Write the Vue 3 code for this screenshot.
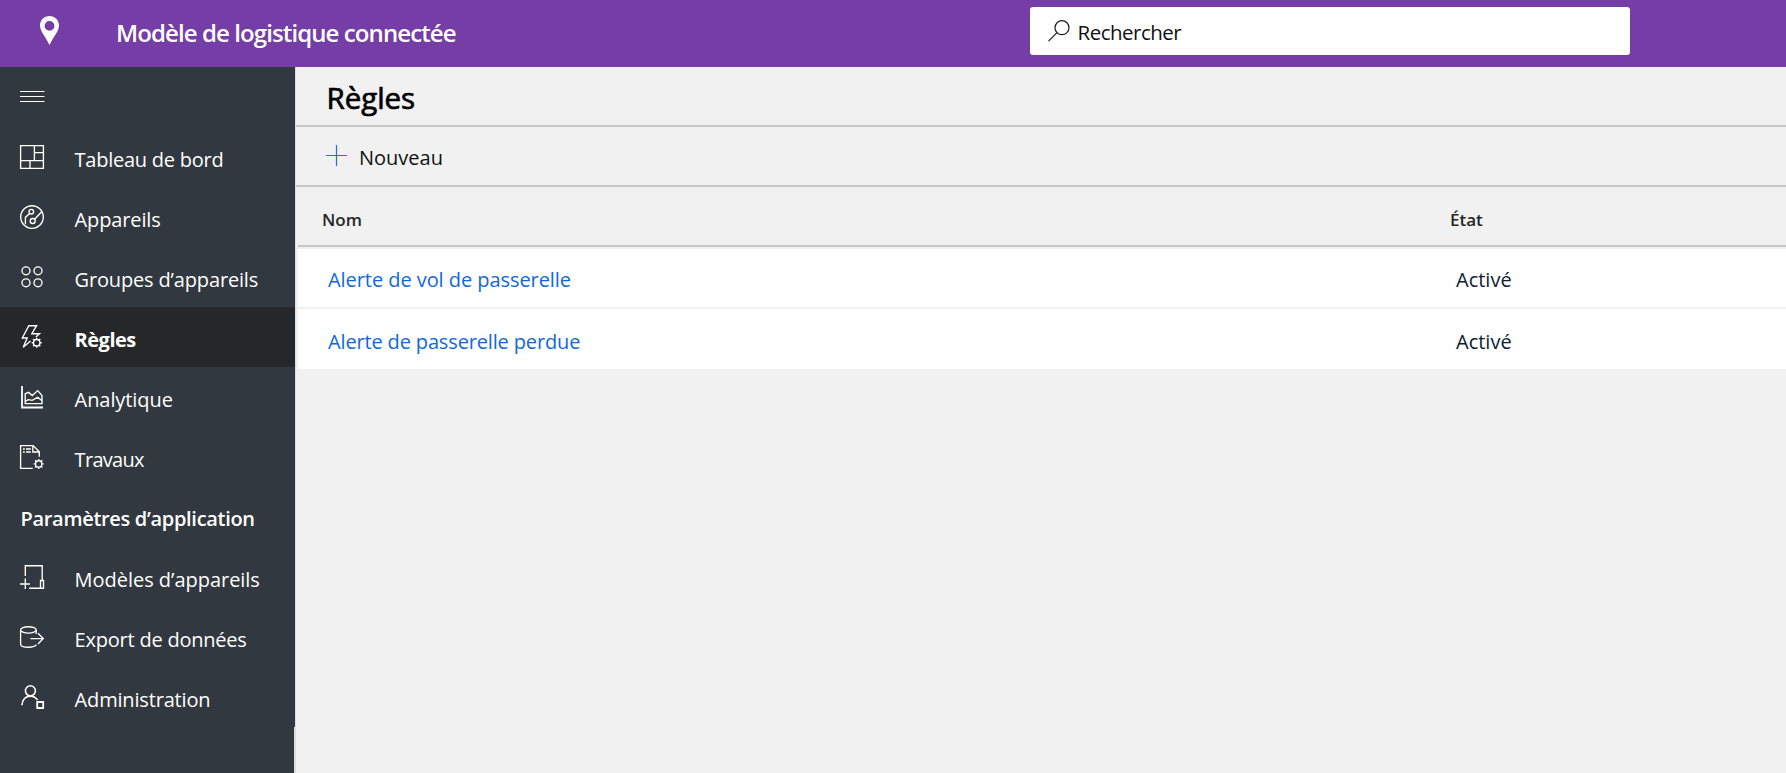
<script setup>
const primary = [
  { id: 'dashboard', label: 'Tableau de bord' },
  { id: 'devices', label: 'Appareils' },
  { id: 'groups', label: 'Groupes d’appareils' },
  { id: 'rules', label: 'Règles', active: true },
  { id: 'analytics', label: 'Analytique' },
  { id: 'jobs', label: 'Travaux' },
]
const settings = [
  { id: 'templates', label: 'Modèles d’appareils' },
  { id: 'export', label: 'Export de données' },
  { id: 'admin', label: 'Administration' },
]
const groups = [
  { title: '', items: primary },
  { title: 'Paramètres d’application', items: settings },
]
const gear = 'M0-3.4V-5M0 3.4V5M-3.4 0H-5M3.4 0H5M-2.4-2.4l-1.2-1.2M2.4-2.4l1.2-1.2M-2.4 2.4l-1.2 1.2M2.4 2.4l1.2 1.2'
const rules = [
  { id: 'vol', name: 'Alerte de vol de passerelle', state: 'Activé' },
  { id: 'perdue', name: 'Alerte de passerelle perdue', state: 'Activé' },
]
</script>

<template>
  <div class="app">
    <header class="topbar">
      <svg class="pin" width="19" height="29" viewBox="0 0 19 29">
        <path fill="#fff" fill-rule="evenodd" d="M9.500 0C4.200 0 0 4.100 0 9.300 0 15.500 5.500 20.500 9.500 29 13.500 20.500 19 15.500 19 9.300 19 4.100 14.800 0 9.500 0Zm0 5a4.900 4.900 0 1 1 0 9.800 4.900 4.900 0 0 1 0-9.800Z" />
      </svg>
      <div class="brand">Modèle de logistique connectée</div>
      <div class="search">
        <svg width="22" height="22" viewBox="0 0 22 22" fill="none" stroke="#1b1b2b" stroke-width="1.2">
          <circle cx="14" cy="7.700" r="7" />
          <path d="M9 12.700.500 21.200" />
        </svg>
        <span class="placeholder">Rechercher</span>
      </div>
    </header>

    <div class="body">
      <aside class="side">
        <div class="menu">
          <svg width="25" height="13" viewBox="0 0 25 13" stroke="#fff"><path d="M0 1.500h24.500M0 6.500h24.500M0 11.500h24.500" /></svg>
        </div>
        <nav v-for="g in groups" :key="g.title">
          <div v-if="g.title" class="group-title">{{ g.title }}</div>
          <a v-for="i in g.items" :key="i.id" class="item" :class="[i.id, { active: i.active }]">
            <svg class="icon" width="24" height="24" viewBox="0 0 24 24">
              <g v-if="i.id === 'dashboard'"><path d="M.600.600h22.800v22.800H.600ZM14.400.600v15M.600 15.600h22.800M14.400 7.600h9M10 15.600v8" /></g>
              <g v-else-if="i.id === 'devices'">
                <circle cx="12" cy="12" r="11.300" /><circle cx="11.300" cy="6.700" r="2.300" /><circle cx="12.700" cy="16" r="2.500" />
                <path d="M9.600 8.400 5.400 12.400v6.800M14.500 14.200l7.300-7.500" />
              </g>
              <g v-else-if="i.id === 'groups'">
                <circle cx="6" cy="5.800" r="4" /><circle cx="18" cy="5.800" r="4" /><circle cx="6" cy="17.800" r="4" /><circle cx="18" cy="17.800" r="4" />
              </g>
              <g v-else-if="i.id === 'rules'">
                <path d="M10.500 16 3.200 22.300 7.200 13H2.300L8.800.700h7.800L11.800 8.700h7.700l-3.700 3.200" />
                <g transform="translate(16.700 17.700)"><circle r="3.200" /><path :d="gear" /></g>
              </g>
              <g v-else-if="i.id === 'analytics'">
                <path class="heavy" d="M2 1v21.500h21" /><path d="M5.200 18.600V8.800l3.300-1.400 3.800 3.200 5.400-5 4.300 5v8Z M5.200 16.500l3-1.900 4 .800 5.500-3.200 4.300 3.600" />
              </g>
              <g v-else-if="i.id === 'jobs'">
                <path d="M12.800 23.400H.600V.600h12.500l6.200 6.200v5M12.800.600V7h6.400M3 4h1.800M3 7h1.800M6 4h4.800M6 7h4.800" />
                <g transform="translate(18.700 18.900)"><circle r="3.200" /><path :d="gear" /></g>
              </g>
              <g v-else-if="i.id === 'templates'"><path d="M5.300 11V.700h16.900v14M9.200 23.200h11M0 19h10M5.300 13.500V24M20.500 15.500h3v7.700h-3Z" /></g>
              <g v-else-if="i.id === 'export'">
                <ellipse cx="8.400" cy="4.900" rx="7.800" ry="3.200" /><path d="M.600 4.900v14c0 2 3.500 3.300 7.800 3.300 4 0 7-.900 8-2.500M16.200 4.900v4M10.500 13.600h12.500M18 8.300l5.300 5.300-5.300 5.300" />
              </g>
              <g v-else>
                <circle class="mid" cx="10.400" cy="5.800" r="5" /><path class="mid" d="M2 20.200C2.500 14 6 11.200 10.400 11.200c3.200 0 5.600 1.300 7.200 3.900" /><path class="heavy" d="M17.200 17h6v6h-6Z" />
              </g>
            </svg>
            <span>{{ i.label }}</span>
          </a>
        </nav>
        <div class="side-foot"></div>
      </aside>
      <div class="edge"></div>

      <main class="main">
        <h1>Règles</h1>
        <div class="toolbar">
          <svg width="21" height="21" viewBox="0 0 21 21" stroke="#2468ff" stroke-width="1.200"><path d="M0 10.500h21M10.500 0v21" /></svg>
          <span>Nouveau</span>
        </div>
        <div class="table">
          <div class="row head"><span>Nom</span><span>État</span></div>
          <div v-for="r in rules" :key="r.id" class="row line" :class="r.id"><a>{{ r.name }}</a><span>{{ r.state }}</span></div>
        </div>
      </main>
    </div>
  </div>
</template>

<style>
body { margin: 0; background: #f1f1f1; }
</style>

<style scoped>
.app { width: 1786px; height: 773px; overflow: hidden; display: flex; flex-direction: column; background: #f1f1f1; font-family: "Open Sans", "Noto Sans", sans-serif; font-size: 20px; }
.app * { box-sizing: border-box; }
.topbar { height: 67px; flex: none; background: #753da6; display: flex; align-items: flex-start; }
.pin { margin: 16px 0 0 40px; flex: none; }
.brand { margin-left: 57px; width: 914px; line-height: 65px; font-size: 24px; font-weight: 600; color: #fff; letter-spacing: -0.9px; white-space: nowrap; }
.search { width: 600px; height: 48px; margin-top: 7px; border-radius: 3px; background: #fff; display: flex; padding-left: 18px; }
.search svg { margin-top: 13px; flex: none; }
.placeholder { margin-left: 7.500px; line-height: 51px; font-size: 20.500px; color: #111; letter-spacing: -0.5px; }
.body { flex: 1; display: flex; min-height: 0; }
.side { width: 295px; flex: none; display: flex; flex-direction: column; background: #32383f; color: #fff; }
.side-foot { flex: 1; border-right: 1px solid #dedede; }
.menu { height: 60px; padding: 23px 0 0 20px; }
.menu svg { display: block; }
.item { height: 60px; padding-left: 20px; display: flex; line-height: 65px; letter-spacing: -0.25px; white-space: nowrap; }
.item.active { background: #262728; font-weight: 700; letter-spacing: -0.5px; }
.item.devices { letter-spacing: -0.14px; }
.item.groups { letter-spacing: -0.16px; }
.item.analytics { letter-spacing: -0.08px; }
.item.jobs { letter-spacing: -0.7px; }
.item.templates { letter-spacing: -0.03px; }
.item.export { letter-spacing: -0.22px; }
.item.admin { letter-spacing: -0.17px; }
.icon { margin: 18px 30.600px 0 0; flex: none; fill: none; stroke: #fff; stroke-width: 1.350; overflow: visible; }
.heavy { stroke-width: 1.800; }
.mid { stroke-width: 1.600; }
.group-title { height: 60px; padding-left: 20.500px; line-height: 64px; font-weight: 600; letter-spacing: -0.31px; white-space: nowrap; }
.edge { width: 1px; background: #dedede; }
.main { flex: 1; min-width: 0; }
h1 { margin: 0; height: 60px; padding-left: 30.500px; border-bottom: 2px solid #c8c8c8; font-size: 29.500px; font-weight: 400; -webkit-text-stroke: 0.7px #000; line-height: 62px; color: #000; letter-spacing: -0.05px; }
.toolbar { height: 60px; padding-left: 30px; border-bottom: 2px solid #c8c8c8; display: flex; line-height: 62px; color: #111; }
.toolbar svg { margin: 18px 12px 0 0; }
.table { margin-left: 2px; }
.row { display: grid; grid-template-columns: 1128px 1fr; padding-left: 30px; background: #fff; color: #0b1c33; white-space: nowrap; }
.row a { color: #1068dc; letter-spacing: -0.06px; }
.row.head { height: 60px; padding-left: 24px; background: #f1f1f1; border-bottom: 2px solid #c8c8c8; margin-bottom: 2px; color: #262626; font-size: 17px; font-weight: 600; line-height: 66px; }
.line { height: 60px; line-height: 62px; }
.line.vol { border-bottom: 2px solid #f1f1f1; }
.line.perdue { line-height: 65px; }
.line.perdue a { letter-spacing: -0.15px; }
</style>
